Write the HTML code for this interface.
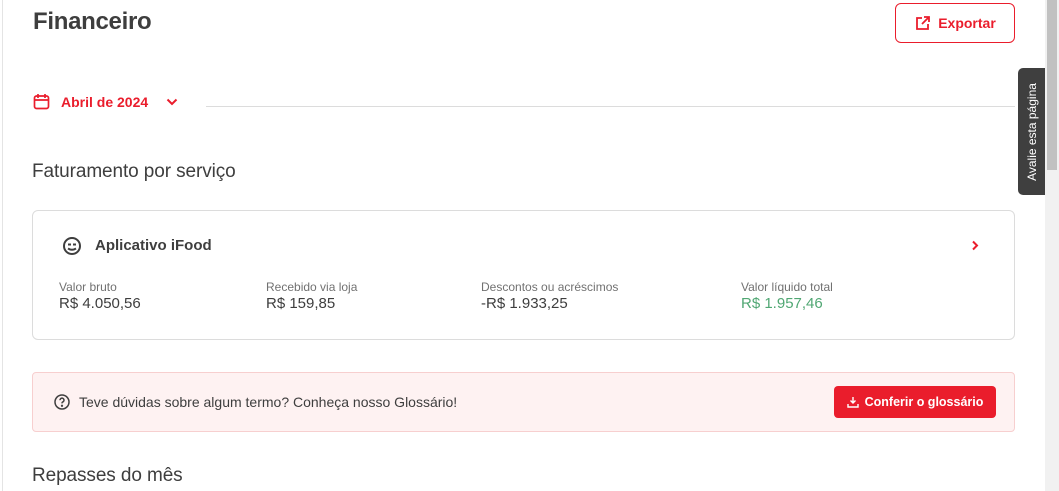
<!DOCTYPE html>
<html><head><meta charset="utf-8"><style>
*{box-sizing:border-box;margin:0;padding:0}
body{width:1059px;height:491px;overflow:hidden;background:#fff;font-family:"Liberation Sans",sans-serif;color:#3e3e3e;position:relative}
.lb{position:absolute;left:2px;top:0;width:1px;height:491px;background:#e4e4e4}
.abs{position:absolute}
h1{position:absolute;left:33px;top:8px;font-size:24px;font-weight:bold;color:#3e3e3e;letter-spacing:-0.3px}
.exp{position:absolute;left:895px;top:3px;width:120px;height:40px;border:1px solid #ea1d2c;border-radius:6px;color:#ea1d2c;font-weight:bold;font-size:14px;display:flex;align-items:center;justify-content:center;gap:7px}
.month{position:absolute;left:33px;top:93px;display:flex;align-items:center;color:#ea1d2c;font-weight:bold;font-size:14px}
.hr{position:absolute;left:206px;top:106px;width:809px;height:1px;background:#dcdcdc}
h2{position:absolute;font-size:19px;font-weight:normal;color:#3e3e3e;letter-spacing:-0.1px}
.card{position:absolute;left:32px;top:210px;width:983px;height:130px;border:1px solid #dcdcdc;border-radius:6px}
.lab{position:absolute;font-size:12px;color:#717171;top:69px}
.val{position:absolute;font-size:15px;color:#3e3e3e;top:84px}
.info{position:absolute;left:32px;top:372px;width:983px;height:60px;background:#fef2f2;border:1px solid #f7cfcf;border-radius:4px}
.btn{position:absolute;left:801px;top:13px;width:162px;height:32px;background:#ea1d2c;border-radius:4px;color:#fff;font-size:12.5px;font-weight:bold;display:flex;align-items:center;justify-content:center;gap:6px}
.sb{position:absolute;left:1045px;top:0;width:14px;height:491px;background:#f1f1f1}
.th{position:absolute;left:1047px;top:0;width:10px;height:170px;background:#c1c1c1}
.tab{position:absolute;left:1018px;top:68px;width:27px;height:127px;background:#3f3f3f;border-radius:5px 0 0 5px}
.tab span{position:absolute;left:50%;top:50%;transform:translate(-50%,-50%) rotate(-90deg);color:#fff;font-size:12px;white-space:nowrap}
</style></head><body>
<div class="lb"></div>
<h1>Financeiro</h1>
<div class="exp"><svg width="17" height="17" viewBox="0 0 17 17" fill="none" stroke="#ea1d2c" stroke-width="1.8"><path d="M8 3H3v11h11V9"/><path d="M10 2h5v5M15 2L8 9"/></svg>Exportar</div>
<div class="month"><svg width="17" height="17" viewBox="0 0 17 17" fill="none" stroke="#ea1d2c" stroke-width="1.7"><rect x="1.5" y="3" width="14" height="12.5" rx="2"/><path d="M1.5 7h14M5 1v4M12 1v4"/></svg><span style="margin-left:11px">Abril de 2024</span><svg style="margin-left:18px" width="12" height="8" viewBox="0 0 12 8" fill="none" stroke="#ea1d2c" stroke-width="2"><path d="M1.5 1.5l4.5 4.5 4.5-4.5"/></svg></div>
<div class="hr"></div>
<h2 style="left:32px;top:161px">Faturamento por serviço</h2>
<div class="card">
<svg class="abs" style="left:29px;top:25px" width="20" height="20" viewBox="0 0 20 20" fill="none" stroke="#3e3e3e" stroke-width="2"><circle cx="10" cy="10" r="8"/><path d="M6 12.5q4 2.5 8 0M6 8.5h3M11 8.5h3"/></svg>
<div class="abs" style="left:62px;top:26px;font-size:15px;font-weight:bold">Aplicativo iFood</div>
<svg class="abs" style="left:938px;top:29px" width="8" height="11" viewBox="0 0 8 11" fill="none" stroke="#ea1d2c" stroke-width="2"><path d="M2 1.5l4 4-4 4"/></svg>
<div class="lab" style="left:26px">Valor bruto</div><div class="val" style="left:26px">R$ 4.050,56</div>
<div class="lab" style="left:233px">Recebido via loja</div><div class="val" style="left:233px">R$ 159,85</div>
<div class="lab" style="left:448px">Descontos ou acréscimos</div><div class="val" style="left:448px">-R$ 1.933,25</div>
<div class="lab" style="left:708px">Valor líquido total</div><div class="val" style="left:708px;color:#50a773">R$ 1.957,46</div>
</div>
<div class="info">
<svg class="abs" style="left:21px;top:21px" width="16" height="16" viewBox="0 0 16 16" fill="none" stroke="#3e3e3e" stroke-width="1.5"><circle cx="8" cy="8" r="7"/><path d="M6 6.2a2 2 0 1 1 2.5 1.9c-.5.2-.5.6-.5 1.3"/><circle cx="8" cy="11.8" r=".4" fill="#3e3e3e"/></svg>
<div class="abs" style="left:46px;top:21px;font-size:14px;color:#3e3e3e">Teve dúvidas sobre algum termo? Conheça nosso Glossário!</div>
<div class="btn"><svg width="12" height="12" viewBox="0 0 12 12" fill="none" stroke="#fff" stroke-width="1.4"><path d="M6 1v6M3.5 4.5L6 7l2.5-2.5M1 8v3h10V8"/></svg>Conferir o glossário</div>
</div>
<h2 style="left:32px;top:465px">Repasses do mês</h2>
<div class="sb"></div><div class="th"></div>
<div class="tab"><span>Avalie esta página</span></div>
</body></html>
